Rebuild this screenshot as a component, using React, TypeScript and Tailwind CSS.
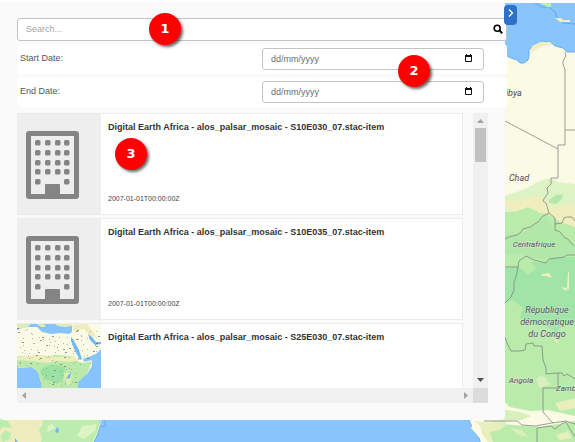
import React from "react";

const BORDERS = [
  "M565 52 L566 56 L563 61 L563 64 L565 70 L565 145 L558 145 L558 178 L551 178 L551 184 L547 188 L548 193 L544 199 L543 201 L546 203 L547 206 L548 210 L549 213 L543 216 L538 222 L530 227 L523 229 L521 232 L517 235 L509 237 L505 239",
  "M565 130 L575 130",
  "M505 121 L558 149",
  "M549 213 L555 218 L555 230 L560 232 L565 238 L568 239 L572 244 L575 246",
  "M555 224 L562 223 L564 218 L567 217 L572 217 L575 221",
  "M505 267 L518 267 L519 261 L526 256 L530 258 L534 260 L546 263 L549 259 L557 258 L564 257 L567 255 L575 255",
  "M518 267 L516 277 L514 282 L514 290 L511 297 L505 303",
  "M505 337 L507 343 L511 351 L520 351 L525 350 L526 344 L533 343 L534 346 L542 346 L543 360 L546 368 L546 374 L557 373 L562 373 L564 376 L567 374 L575 379",
  "M558 373 L558 388 L543 388 L543 412 L551 421 L553 423",
  "M484 421 L517 421 L522 425 L535 426 L552 423 L566 421 L575 424",
  "M537 442 L537 428 L551 426 L555 429 L563 423 L566 422 L570 429 L575 437",
];

type LabelProps = { x: number; y: number; size: number; anchor?: "start" | "middle"; children: string };

function MapLabel({ x, y, size, anchor = "middle", children }: LabelProps) {
  return (
    <text
      x={x}
      y={y}
      fontSize={size}
      fontStyle="italic"
      fontFamily="Roboto, 'Liberation Sans', sans-serif"
      textAnchor={anchor}
      fill="#4c4c66"
      stroke="#f3f8e5"
      strokeOpacity="0.5"
      strokeWidth="1"
      paintOrder="stroke"
    >
      {children}
    </text>
  );
}

function MapBackground() {
  return (
    <svg className="absolute left-0 top-[3px]" width="575" height="439" viewBox="0 3 575 439" role="img" aria-label="Map of Africa">
      <rect y="3" width="575" height="439" fill="#89c4fd" />
      <path d="M500 56 L505 55 L511 58 L517 60 L520 63 L524 63 L528 60 L529 56 L529 50 L535 44 L543 41 L550 42 L555 46 L563 48 L567 52 L580 52 V450 H482 L479 437 L475 433 L472 427 L469 420 L500 400 Z" fill="#fbfae5" stroke="#66b1f4" strokeWidth="1" />
      <path d="M530 53 L532 46 L540 42 L550 42 L553 45 L543 46 L537 49 Z" fill="#f2edc2" />
      <path d="M545 3 L550 8 L555 12 L557 18 L563 23 L575 24 M535 3 L541 7 L548 7" fill="none" stroke="#5aa8f1" />
      <path d="M540 3 L551 3 L551 7 L547 7 Z" fill="#bdeeae" />
      <path d="M555 18 L561 18 L563 20 L570 20 L570 22 L560 22 Z" fill="#f2edc2" />
      <path d="M500 197 L517 192 L527 188 L542 180 L551 178 L558 182 L575 184 V300 H500 Z" fill="#ddf3c4" />
      <path d="M500 199 L520 201 L535 196 L546 199 L552 207 L575 204 V228 L555 224 L540 214 L520 212 L500 207 Z" fill="#f0edbf" />
      <path d="M500 212 L515 212 L528 207 L540 213 L548 214 L560 222 L575 227 V416 L548 410 L530 411 L510 407 L500 398 Z" fill="#b9ebab" />
      <path d="M549 200 L556 195 L563 194 L562 199 L556 204 L549 203 Z" fill="#b3e8a8" />
      <path d="M505 268 L519 267 L528 275 L536 269 L532 262 L548 263 L552 257 L575 257 V326 L564 323 L556 333 L548 327 L532 322 L520 318 L523 308 L513 300 L505 303 Z" fill="#a1e4a7" />
      <path d="M505 235 L525 232 L545 216 L552 227 L575 246 V254 L550 258 L532 258 L523 253 L505 255 Z" fill="#b1e8aa" />
      <path d="M542 274 L549 273 L551 276 L551 278 L546 276 L541 276 Z M561 287 L567 288 L567 291 L563 289 Z M568 272 L569 272 L569 290 L567 288 Z M554 338 L559 341 L557 343 Z" fill="#eef0ba" />
      <path d="M536 379 L541 375 L546 378 L548 382 L552 384 L545 386 L539 388 Z" fill="#d8f0bd" />
      <path d="M490 409 L507 410 L520 412 L531 416 L521 420 L500 421 Z" fill="#d9f0bd" />
      <path d="M474 422 L540 427 L575 421 V442 H483 L479 436 Z" fill="#baebaa" />
      <path d="M474 421 L486 423 L497 420 L506 425 L500 430 L490 432 L493 442 H484 L480 434 L475 431 Z M555 403 L575 398 V408 L560 411 Z M556 435 L568 431 L572 438 L560 440 Z" fill="#e7f0bd" />
      <path d="M474 421 L480 426 L482 434 L488 442 H483 L477 435 L471 428 Z" fill="#fdfbe6" />
      <path d="M498 421 L507 422 L505 426 L497 425 Z M511 428 L522 430 L528 437 L518 435 Z" fill="#d9f0bd" />

      <path d="M0 410 H101 L99 424 L97 435 L94 442 H0 Z" fill="#bdedae" />
      <path d="M0 414 H42 L43 424 L39 430 L42 438 L41 442 H0 Z" fill="#eeecbd" />
      <path d="M0 419 L8 421 L12 428 L3 427 L0 429 Z M5 430 L11 433 L10 439 L3 442 L0 437 Z" fill="#bdedae" />
      <path d="M82 426 L96 424 L96 430 L84 439 L77 436 Z M48 425 L53 424 L55 428 L47 432 Z" fill="#dcf3c4" />
      <path d="M57 427 L59 430 L58 433 L55 432 Z M15 438 L18 442 H15 Z" fill="#70b6f5" />
      <path d="M104 420 L106 426 L99 427 L98 434 L94 442" fill="none" stroke="#65b0f2" />
      <path d="M101 420 L99 427 L97 433 L93 442" fill="none" stroke="#f6efbd" />

      {BORDERS.map((d) => (
        <path key={d} d={d} fill="none" stroke="#7d827d" strokeOpacity="0.75" strokeWidth="1" />
      ))}
      <MapLabel x={506} y={96} size={9} anchor="start">ibya</MapLabel>
      <MapLabel x={519} y={181} size={9}>Chad</MapLabel>
      <MapLabel x={534} y={247} size={8}>Centrafrique</MapLabel>
      <MapLabel x={547} y={313} size={9}>République</MapLabel>
      <MapLabel x={547} y={325} size={9}>démocratique</MapLabel>
      <MapLabel x={547} y={337} size={9}>du Congo</MapLabel>
      <MapLabel x={521} y={383} size={8}>Angola</MapLabel>
      <MapLabel x={556} y={391} size={8} anchor="start">Zamb</MapLabel>
    </svg>
  );
}

function BuildingIcon() {
  const rows = [9, 19, 29, 38, 48];
  return (
    <svg width="53" height="68" viewBox="0 0 53 68" aria-hidden="true">
      <rect width="53" height="68" rx="3" fill="#848484" />
      <rect x="5" y="5" width="43" height="58" fill="#eeeeee" />
      {rows.map((y, i) =>
        [9, 19, 29, 38].map((x, j) =>
          i === 4 && (j === 1 || j === 2) ? null : (
            <rect key={`${x}-${y}`} x={x} y={y} width="5.5" height="5.5" rx="1.6" fill="#848484" />
          )
        )
      )}
      <path d="M19 66 V54 Q19 53 20 53 H33 Q34 53 34 54 V66 Z" fill="#848484" />
    </svg>
  );
}

const DOTS = Array.from({ length: 170 }, (_, i) => {
  const x = (i * 37 + ((i * i) % 11)) % 82;
  const y = 4 + ((i * 23 + ((i * i) % 7)) % 58);
  return { x, y, dark: i % 4 === 0 };
}).filter(({ x, y }) => !(y > 43 && (x < 25 || x > 58)) && !(x > 70 && y > 30) && !(y < 12 && x > 22 && x < 58));

function AfricaThumb() {
  return (
    <svg width="84" height="102" viewBox="0 0 84 102" role="img" aria-label="Map preview">
      <rect width="84" height="102" fill="#87c3fc" />
      <path d="M0 6 L8 3 L20 3 L25 8 L34 10 L43 9 L52 10 L55 8 L55 0 H84 V25 L79 30 L66 35 L67 38 L75 36 L75 42 L70 50 L61 57 L60 66 L60 102 H28 V63 L24 58 L21 48 L15 43 L0 44 Z" fill="#fbfae5" />
      <path d="M0 0 H14 L9 4 L0 5 Z M20 0 H27 L29 3 L24 3 Z M38 0 H55 V2 L48 3 L41 2 Z" fill="#dceeb8" />
      <path d="M55 1 L70 0 L76 8 L80 14 L73 12 L67 5 L57 7 Z" fill="#eeebbd" />
      <path d="M71 10 L75 13 L79 18 L84 18 V20 L78 21 L73 16 Z" fill="#73b7f6" />
      <path d="M0 32 L22 33 L40 31 L55 32 L62 38 L67 39 L75 37 L70 50 L61 58 L60 102 H28 L24 58 L21 48 L15 43 L0 44 Z" fill="#b9eaa9" />
      <path d="M0 33 L24 31 L40 33 L57 32 L62 37 L52 38 L40 37 L29 39 L15 37 L0 36 Z" fill="#ebedbb" />
      <path d="M27 43 L38 40 L48 43 L46 55 L41 59 L29 56 L23 48 Z" fill="#9be1a3" />
      <path d="M54 13 L56 15 L62 26 L65 35 L63 36 L58 27 L54 17 Z" fill="#73b7f6" />
      <path d="M47 50 L51 48 L55 51 L53 61 L48 60 Z" fill="#dfedb2" />
      <path d="M51 51 L54 49 L53 54 L50 55 Z M48 54 L49 61 L48 60 Z" fill="#6eb5f6" />
      {DOTS.map(({ x, y, dark }) => (
        <rect key={`${x}-${y}`} x={x} y={y} width={dark ? 2 : 1} height="1" fill={dark ? "#646970" : "#8d9a87"} fillOpacity="0.7" />
      ))}
    </svg>
  );
}

function Badge({ label, className }: { label: string; className: string }) {
  return (
    <span
      className={`absolute flex size-8 items-center justify-center rounded-full bg-[#ff0000] font-['DejaVu_Sans'] text-[13px] font-bold text-white shadow-[2px_2px_3px_rgba(0,0,0,0.6)] ${className}`}
    >
      {label}
    </span>
  );
}

function DateRow({ id, label }: { id: string; label: string }) {
  return (
    <div className="flex h-[30px] items-center rounded bg-white pr-[23px] pl-[3px]">
      <label htmlFor={id} className="flex-1 text-[#555555]">{label}</label>
      <div className="relative w-1/2 max-w-[222px]">
        <input
          id={id}
          type="text"
          placeholder="dd/mm/yyyy"
          className="block h-[22px] w-full rounded-[3px] border border-[#c4c4c4] bg-white px-2 text-[#555555] placeholder:text-[#6c6c6c]"
        />
        <button type="button" aria-label={`Pick ${label}`} className="absolute top-[5px] right-[11px]">
          <svg width="9" height="10" viewBox="0 0 9 10" aria-hidden="true">
            <path d="M1.5 2.5 H7.5 V8.5 H1.5 Z" fill="none" stroke="#111" />
            <path d="M1 2 H8 V4 H1 Z M2 1 H3 V2 H2 Z M6 1 H7 V2 H6 Z" fill="#111" />
          </svg>
        </button>
      </div>
    </div>
  );
}

type Item = { tile: string; date: string; mapped?: boolean };

const ITEMS: Item[] = [
  { tile: "S10E030_07", date: "2007-01-01T00:00:00Z" },
  { tile: "S10E035_07", date: "2007-01-01T00:00:00Z" },
  { tile: "S25E030_07", date: "", mapped: true },
];

function ResultCard({ item }: { item: Item }) {
  return (
    <li className="flex h-[102px] shrink-0 border-y border-r border-[#ebebeb] bg-white">
      <div className="w-[84px] shrink-0 overflow-hidden bg-[#eeeeee]">
        {item.mapped ? (
          <AfricaThumb />
        ) : (
          <div className="pt-[17px] pl-[9px]">
            <BuildingIcon />
          </div>
        )}
      </div>
      <div className="flex min-w-0 flex-1 flex-col justify-between pt-[7px] pb-[10px] pl-[7px]">
        <h3 className="text-[9px] leading-3 font-bold whitespace-nowrap text-[#333333]">
          Digital Earth Africa - alos_palsar_mosaic - {item.tile}.stac-item
        </h3>
        {item.date && <time className="text-[7px] leading-[10px] text-[#444444]">{item.date}</time>}
      </div>
    </li>
  );
}

function Arrow({ d, fill }: { d: string; fill: string }) {
  return (
    <svg width="15" height="15" viewBox="0 0 15 15" aria-hidden="true">
      <path d={d} fill={fill} />
    </svg>
  );
}

export default function App() {
  return (
    <main className="relative min-h-screen overflow-hidden bg-white pt-[2px] font-['Liberation_Sans',Arial,sans-serif] text-[9px]">
      <MapBackground />
      <section className="relative mr-[70px] rounded-b bg-[#fafafa] pt-4 pb-[17px] pl-[17px]">
        <div className="-mr-[2px] flex flex-col gap-[3px]">
          <form className="flex h-[23px] items-center rounded-[3px] border border-[#c4c4c4] bg-white pr-[3px] pl-2">
            <input type="text" aria-label="Search" placeholder="Search..." className="min-w-0 flex-1 bg-transparent text-[#555555] outline-none placeholder:text-[#a5a5a5]" />
            <button type="button" aria-label="Run search" className="pb-0.5">
              <svg width="10" height="10" viewBox="0 0 10 10" fill="none" stroke="#000" aria-hidden="true">
                <circle cx="4.2" cy="4.2" r="3" strokeWidth="1.6" />
                <path d="M6.4 6.4 L9.2 9.2" strokeWidth="2" />
              </svg>
            </button>
          </form>
          <DateRow id="start-date" label="Start Date:" />
          <DateRow id="end-date" label="End Date:" />
        </div>

        <div className="mt-1.5 mr-[17px] grid grid-cols-[1fr_15px]">
          <ul className="flex h-[275px] flex-col gap-[3px] overflow-hidden pr-2.5">
            {ITEMS.map((item) => (
              <ResultCard key={item.tile} item={item} />
            ))}
          </ul>
          <div className="flex flex-col items-center bg-[#f0f0f0]">
            <Arrow d="M4 10 L7.5 6 L11 10 Z" fill="#a3a3a3" />
            <div className="h-[34px] w-[11px] bg-[#c1c1c1]" />
            <div className="mt-auto">
              <Arrow d="M4 5 H11 L7.5 9 Z" fill="#505050" />
            </div>
          </div>
          <div className="flex justify-between bg-[#f0f0f0]">
            <Arrow d="M9 4 V11 L5 7.5 Z" fill="#a3a3a3" />
            <Arrow d="M6 4 V11 L10 7.5 Z" fill="#a3a3a3" />
          </div>
          <div className="bg-[#dcdcdc]" />
        </div>

        <button
          type="button"
          aria-label="Collapse panel"
          className="absolute top-[3px] -right-3 flex h-5 w-[13px] items-start justify-center rounded bg-[#2d70c8] pt-1"
        >
          <svg width="6" height="8" viewBox="0 0 6 8" fill="none" stroke="#fff" strokeWidth="1.3" aria-hidden="true">
            <path d="M1 0.5 L4.5 4 L1 7.5" />
          </svg>
        </button>
        <Badge label="1" className="top-[11px] left-[149px]" />
        <Badge label="2" className="top-[53px] left-[398px]" />
        <Badge label="3" className="top-[136px] left-[115px]" />
      </section>
    </main>
  );
}
